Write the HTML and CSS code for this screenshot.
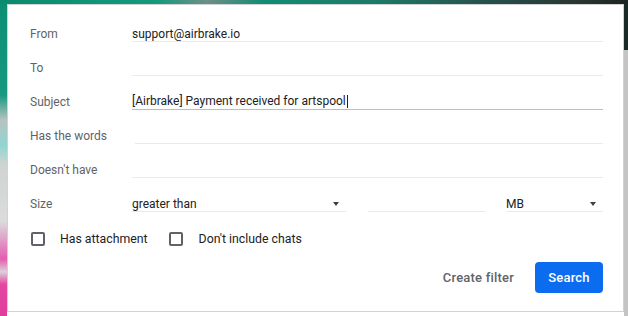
FILE: index.html
```html
<!DOCTYPE html>
<html>
<head>
<meta charset="utf-8">
<link rel="stylesheet" href="styles.css">
</head>
<body>
<div class="dialog">
  <div class="row"><span class="label">From</span><div class="field">support@airbrake.io</div></div>
  <div class="row"><span class="label">To</span><div class="field"></div></div>
  <div class="row"><span class="label">Subject</span><div class="field focused"><span class="value">[Airbrake] Payment received for artspool</span><span class="caret"></span></div></div>
  <div class="row"><span class="label">Has the words</span><div class="field indent"></div></div>
  <div class="row"><span class="label">Doesn't have</span><div class="field"></div></div>
  <div class="row"><span class="label">Size</span>
    <div class="size-group">
      <div class="field select op">greater than<span class="arrow"></span></div>
      <div class="field num"></div>
      <div class="field select unit">MB<span class="arrow"></span></div>
    </div>
  </div>
  <div class="checks">
    <label class="check"><span class="box"></span>Has attachment</label>
    <label class="check"><span class="box"></span>Don't include chats</label>
  </div>
  <div class="actions">
    <button class="btn text">Create filter</button>
    <button class="btn primary">Search</button>
  </div>
</div>
</body>
</html>
```
FILE: styles.css
```css
html, body { margin: 0; padding: 0; }
body {
  width: 628px;
  height: 316px;
  overflow: hidden;
  font-family: Roboto, "Liberation Sans", sans-serif;
  background:
    linear-gradient(to right, #0b8a6f 0%, #159a7e 25%, #6e8f86 33%, #128c74 42%, #1d7a68 60%, #27504a 78%, #2a3532 92%, #1c2422 100%) top left / 100% 4px no-repeat,
    linear-gradient(to bottom, #0b8e74 0%, #17997f 30%, #b7c3c0 38%, #8fd5d1 46%, #cfd3d2 52%, #dcdcdc 70%, #e35db0 82%, #dcd2da 86%, #e4479f 90%, #e03d9b 100%) left top / 7px 100% no-repeat,
    linear-gradient(to bottom, #1a2a27 0, #1a2a27 50px, #c4c4c4 50px, #c4c4c4 100%) right top / 4px 100% no-repeat,
    #ffffff;
  padding-top: 4px;
  box-sizing: border-box;
}
.dialog {
  margin-left: 7px;
  width: 617px;
  height: 308px;
  box-sizing: border-box;
  background: #fff;
  border: 1px solid #d2d2d2;
  padding: 11px 20px 0 22px;
  color: #202124;
  font-size: 12px;
}
.row {
  display: grid;
  grid-template-columns: 102px 1fr;
  height: 34px;
  align-items: start;
}
.label {
  color: #5f6368;
  line-height: 16px;
  padding-top: 10px;
}
.field {
  height: 26px;
  box-sizing: border-box;
  padding-top: 10px;
  line-height: 16px;
  border-bottom: 1px solid #e8eaed;
  white-space: nowrap;
  position: relative;
  overflow: hidden;
}
.field.focused {
  display: flex;
  align-items: center;
  padding-top: 9px;
  border-bottom: 1px solid #9fc0f8;
}
.field.indent { margin-left: 3px; }
.caret {
  width: 1px;
  height: 13px;
  background: #202124;
  margin-left: 1px;
}
.size-group {
  display: flex;
  gap: 22px;
}
.select.op { width: 214px; }
.num { width: 117px; margin-right: -1px; }
.select.unit { flex: 1; }
.arrow {
  position: absolute;
  right: 7px;
  top: 16px;
  width: 0;
  height: 0;
  border-left: 3.5px solid transparent;
  border-right: 3.5px solid transparent;
  border-top: 4px solid #3c4043;
}
.checks {
  display: flex;
  align-items: center;
  height: 22px;
  margin-top: 8px;
  padding-left: 1px;
  gap: 21px;
}
.check {
  display: flex;
  align-items: center;
  gap: 15px;
  color: #202124;
  font-size: 12.3px;
}
.check + .check { gap: 16px; }
.box {
  width: 14px;
  height: 14px;
  box-sizing: border-box;
  border: 2px solid #5f6368;
  border-radius: 2px;
}
.actions {
  display: flex;
  justify-content: flex-end;
  align-items: center;
  margin-top: 12px;
  gap: 9px;
}
.btn {
  font-family: Roboto, "Liberation Sans", sans-serif;
  font-weight: 500;
  font-size: 13px;
  border: 0;
  height: 31px;
  border-radius: 4px;
  letter-spacing: 0.2px;
}
.btn.text {
  background: transparent;
  color: #5f6368;
  padding: 0 12px;
}
.btn.primary {
  background: #0b6cf0;
  color: #fff;
  width: 68px;
  padding: 0;
}
```
